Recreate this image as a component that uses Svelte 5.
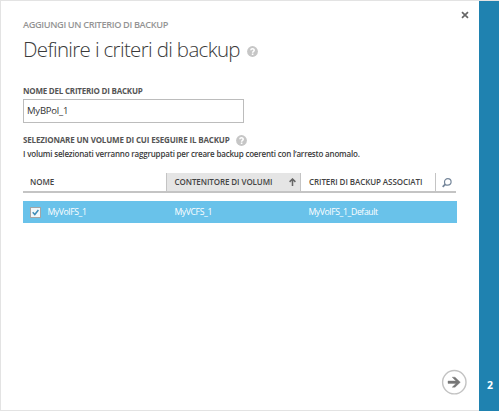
<script>
  const rows = [
    { name: 'MyVolFS_1', container: 'MyVCFS_1', policies: 'MyVolFS_1_Default', checked: true }
  ];
  const policyName = 'MyBPol_1';
</script>

{#snippet help(size)}
  <svg class="help" width={size} height={size} viewBox="0 0 11 11" aria-hidden="true">
    <circle cx="5.5" cy="5.5" r="5.4" fill="#c6c6c6" />
    <path d="M3.8 4.2C3.9 2.3 7.2 2.3 7.2 4.2C7.2 5.4 5.6 5.3 5.6 6.7" fill="none" stroke="#fff" stroke-width="1.5" />
    <rect x="4.8" y="7.5" width="1.6" height="1.5" fill="#fff" />
  </svg>
{/snippet}

<div class="dialog">
  <main>
    <button class="close" aria-label="Chiudi">
      <svg width="8" height="8" viewBox="0 0 8 8"><path d="M1 1.2L7 6.8M7 1.2L1 6.8" stroke="#666" stroke-width="1.7" /></svg>
    </button>
    <div class="eyebrow">AGGIUNGI UN CRITERIO DI BACKUP</div>
    <h1><span>Definire i criteri di backup</span>{@render help(11)}</h1>
    <div class="label name-label">NOME DEL CRITERIO DI BACKUP</div>
    <div class="input"><span>{policyName}</span></div>
    <div class="label pick"><span>SELEZIONARE UN VOLUME DI CUI ESEGUIRE IL BACKUP</span>{@render help(11)}</div>
    <div class="desc">I volumi selezionati verranno raggruppati per creare backup coerenti con l’arresto anomalo.</div>

    <div class="head">
      <div class="c1">NOME</div>
      <div class="c2">
        <span>CONTENITORE DI VOLUMI</span>
        <svg width="7" height="8" viewBox="0 0 7 8"><path d="M3.5 8V1M.6 3.9L3.5 1L6.4 3.9" fill="none" stroke="#666" stroke-width="1.5" /></svg>
      </div>
      <div class="c3">CRITERI DI BACKUP ASSOCIATI</div>
      <div class="c4">
        <svg width="10" height="10" viewBox="0 0 10 10" fill="none" stroke="#75869a"><circle cx="5.8" cy="3.9" r="3.3" stroke-width="1.2" /><path d="M3.4 6.2L.7 8.9" stroke-width="1.8" /></svg>
      </div>
    </div>
    {#each rows as row}
      <div class="row">
        <div class="r1">
          <span class="check">
            {#if row.checked}
              <svg width="7" height="7" viewBox="0 0 7 7"><path d="M.7 3.3L2.8 5.5L6.4 1" fill="none" stroke="#3c8cb8" stroke-width="1.5" /></svg>
            {/if}
          </span>
          <span>{row.name}</span>
        </div>
        <div class="r2">{row.container}</div>
        <div class="r3">{row.policies}</div>
      </div>
    {/each}

    <button class="next" aria-label="Avanti">
      <svg width="26" height="26" viewBox="0 0 26 26"><circle cx="13.3" cy="13.2" r="11.7" fill="#fff" stroke="#c3c3c3" stroke-width="1.4" /><path d="M7 12H15L11.2 8.2H14L19.3 13.2L14 18.2H11.2L15 14.4H7Z" fill="#777" stroke="#777" stroke-width=".4" /></svg>
    </button>
  </main>
  <aside>2</aside>
</div>

<style>
  :global(body) { margin: 0; background: #fff; }
  .dialog {
    box-sizing: border-box; width: 499px; height: 411px; display: flex;
    border-top: 1px solid #e3e3e3; border-left: 1px solid #e3e3e3;
    font-family: "Open Sans", "Noto Sans", sans-serif; color: #555; background: #fff;
  }
  main {
    box-sizing: border-box; width: 478px; height: 410px; padding: 15px 0 0 22px;
    position: relative; display: flex; flex-direction: column;
    border-bottom: 1px solid #e3e3e3; white-space: nowrap;
  }
  aside {
    box-sizing: border-box; width: 20px; padding: 377px 0 0 2px; background: #1f82b0; color: #fff;
    font-size: 10.5px; line-height: 14px; font-weight: 700; text-align: center;
  }
  button { border: 0; padding: 0; background: none; display: block; }
  svg { display: block; flex: none; }
  .close { position: absolute; left: 460px; top: 10px; }
  .next { position: absolute; left: 440px; top: 368px; }
  .eyebrow { height: 16px; line-height: 17px; font-size: 9.2px; font-weight: 600; color: #949494; letter-spacing: -0.36px; }
  h1 { margin: 0; height: 34px; display: flex; align-items: center; font-size: 20.5px; line-height: 34px; font-weight: 300; letter-spacing: -0.66px; color: #3a3a3a; }
  h1 .help { margin: 4px 0 0 7px; }
  .label { font-size: 8px; line-height: 14px; height: 14px; font-weight: 700; letter-spacing: -0.22px; }
  .name-label { margin-top: 18px; }
  .input { box-sizing: border-box; width: 221px; height: 24px; margin-top: 1px; padding-left: 3px; border: 1px solid #bcbcbc; font-size: 9.5px; line-height: 22px; letter-spacing: -0.2px; color: #333; }
  .pick { display: flex; align-items: center; margin-top: 10px; letter-spacing: -0.16px; }
  .pick .help { margin-left: 6px; }
  .desc { height: 14px; line-height: 13px; font-size: 8px; font-weight: 600; letter-spacing: -0.19px; color: #3a3a3a; }
  .head { box-sizing: border-box; width: 433px; height: 20px; margin-top: 12px; display: flex; border-bottom: 2px solid #c4c4c4; font-size: 8px; line-height: 18px; font-weight: 600; letter-spacing: -0.08px; color: #444; }
  .head > div { box-sizing: border-box; }
  .c1 { width: 143px; padding-left: 7px; }
  .c2 { width: 135px; padding: 0 4px 0 7.5px; display: flex; align-items: center; justify-content: space-between; background: #e5e5e5; border-left: 1px solid #c4c4c4; border-right: 1px solid #c4c4c4; }
  .c3 { width: 134px; padding-left: 8px; }
  .c4 { padding: 5px 0 0 6px; flex: 1; border-left: 1px solid #c4c4c4; }
  .row { width: 434px; height: 22px; margin-top: 8px; display: flex; background: #69c2ea; color: #fff; font-size: 8.7px; line-height: 23px; letter-spacing: -0.4px; }
  .r1 { width: 151.4px; display: flex; align-items: center; }
  .r2 { width: 134px; }
  .check { box-sizing: border-box; width: 11px; height: 11px; margin: 0 6.4px 0 7px; padding: 1px; border: 1px solid #a5a5a5; background: #f2f8fb; }
</style>
